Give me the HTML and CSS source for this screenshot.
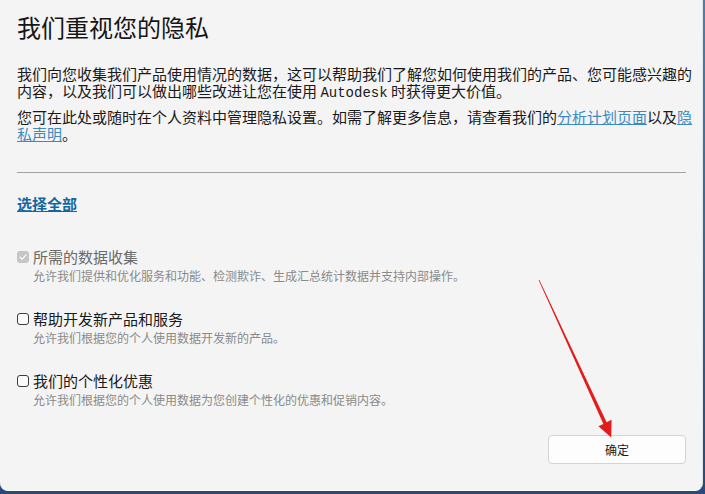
FILE: index.html
```html
<!DOCTYPE html>
<html lang="zh-CN">
<head>
<meta charset="utf-8">
<title>我们重视您的隐私</title>
<link rel="stylesheet" href="styles.css">
</head>
<body>
<div class="window">
  <h1 class="title">我们重视您的隐私</h1>
  <div class="intro">
    <p class="para">我们向您收集我们产品使用情况的数据，这可以帮助我们了解您如何使用我们的产品、您可能感兴趣的内容，以及我们可以做出哪些改进让您在使用 <span class="mono">Autodesk</span> 时获得更大价值。</p>
    <p class="para">您可在此处或随时在个人资料中管理隐私设置。如需了解更多信息，请查看我们的<a class="link" href="#">分析计划页面</a>以及<a class="link" href="#">隐私声明</a>。</p>
  </div>
  <div class="divider"></div>
  <a class="select-all" href="#">选择全部</a>
  <div class="options">
    <div class="option">
      <div class="option-head disabled">
        <span class="box box-checked"><svg viewBox="0 0 12 12" width="12" height="12"><path d="M3 6.2 L5.1 8.2 L9 3.9" fill="none" stroke="#ffffff" stroke-width="1.2" stroke-linecap="round" stroke-linejoin="round"/></svg></span>
        <span class="label">所需的数据收集</span>
      </div>
      <div class="desc">允许我们提供和优化服务和功能、检测欺诈、生成汇总统计数据并支持内部操作。</div>
    </div>
    <div class="option">
      <div class="option-head">
        <span class="box"></span>
        <span class="label">帮助开发新产品和服务</span>
      </div>
      <div class="desc">允许我们根据您的个人使用数据开发新的产品。</div>
    </div>
    <div class="option">
      <div class="option-head">
        <span class="box"></span>
        <span class="label">我们的个性化优惠</span>
      </div>
      <div class="desc">允许我们根据您的个人使用数据为您创建个性化的优惠和促销内容。</div>
    </div>
  </div>
  <div class="footer">
    <button class="ok-btn" type="button">确定</button>
  </div>
  <svg class="arrow" width="703" height="492" viewBox="0 0 703 492">
    <polygon points="538.7,280.2 603.4,423.9 598.4,426.3 611.2,437.5 611.6,419.8 606.6,422.3 539.3,279.8" fill="#e31c1c"/>
  </svg>
</div>
</body>
</html>
```
FILE: styles.css
```css
html, body {
  margin: 0;
  padding: 0;
}
body {
  width: 705px;
  height: 494px;
  background: linear-gradient(to bottom, #4d7fae, #2a4a78);
  overflow: hidden;
  font-family: "Noto Sans CJK SC", "Noto Sans", sans-serif;
  color: #1c1c1c;
}
.window {
  position: relative;
  box-sizing: border-box;
  width: 703px;
  height: 491px;
  background: #f4f4f4;
  border-right: 1px solid #dfe6ec;
  border-bottom: 1px solid #ffffff;
  border-radius: 0 0 8px 8px;
  padding: 11px 4px 0 17px;
}
.title {
  margin: 0;
  font-size: 24px;
  line-height: 32px;
  font-weight: 400;
  color: #161616;
}
.intro {
  margin-top: 22px;
}
.para {
  margin: 0 0 6px 0;
  font-size: 15px;
  line-height: 17px;
  color: #1a1a1a;
}
.mono {
  font-family: "Liberation Mono", monospace;
  font-size: 14px;
  line-height: 17px;
}
.link {
  color: #3b8bc2;
  text-decoration: underline;
  line-height: 17px;
}
.divider {
  margin-top: 30px;
  margin-right: 12px;
  height: 1px;
  background: #a2a2a2;
}
.select-all {
  display: inline-block;
  margin-top: 21px;
  font-size: 15px;
  line-height: 20px;
  font-weight: 700;
  color: #1466a3;
  text-decoration: underline;
}
.options {
  margin-top: 32px;
  display: flex;
  flex-direction: column;
  gap: 25px;
}
.option-head {
  display: flex;
  align-items: center;
  gap: 4px;
  height: 20px;
}
.box {
  box-sizing: border-box;
  width: 12px;
  height: 12px;
  border: 1px solid #3c3c3c;
  border-radius: 3px;
  background: #fbfbfb;
  display: flex;
  align-items: center;
  justify-content: center;
}
.box-checked {
  border: none;
  background: #c6c6c6;
}
.label {
  font-size: 15px;
  line-height: 20px;
  color: #1a1a1a;
}
.disabled .label {
  color: #6a6a6a;
}
.desc {
  margin-top: 1px;
  padding-left: 16px;
  font-size: 12px;
  line-height: 16px;
  color: #8a8a8a;
}
.footer {
  display: flex;
  justify-content: flex-end;
  margin-top: 27px;
  margin-right: 12px;
}
.ok-btn {
  width: 138px;
  height: 29px;
  background: #fdfdfd;
  border: 1px solid #d3d3d3;
  border-radius: 4px;
  font-family: "Noto Sans CJK SC", sans-serif;
  font-size: 12px;
  color: #1a1a1a;
  padding: 0;
}
.arrow {
  position: absolute;
  left: 0;
  top: 0;
  pointer-events: none;
}
```
